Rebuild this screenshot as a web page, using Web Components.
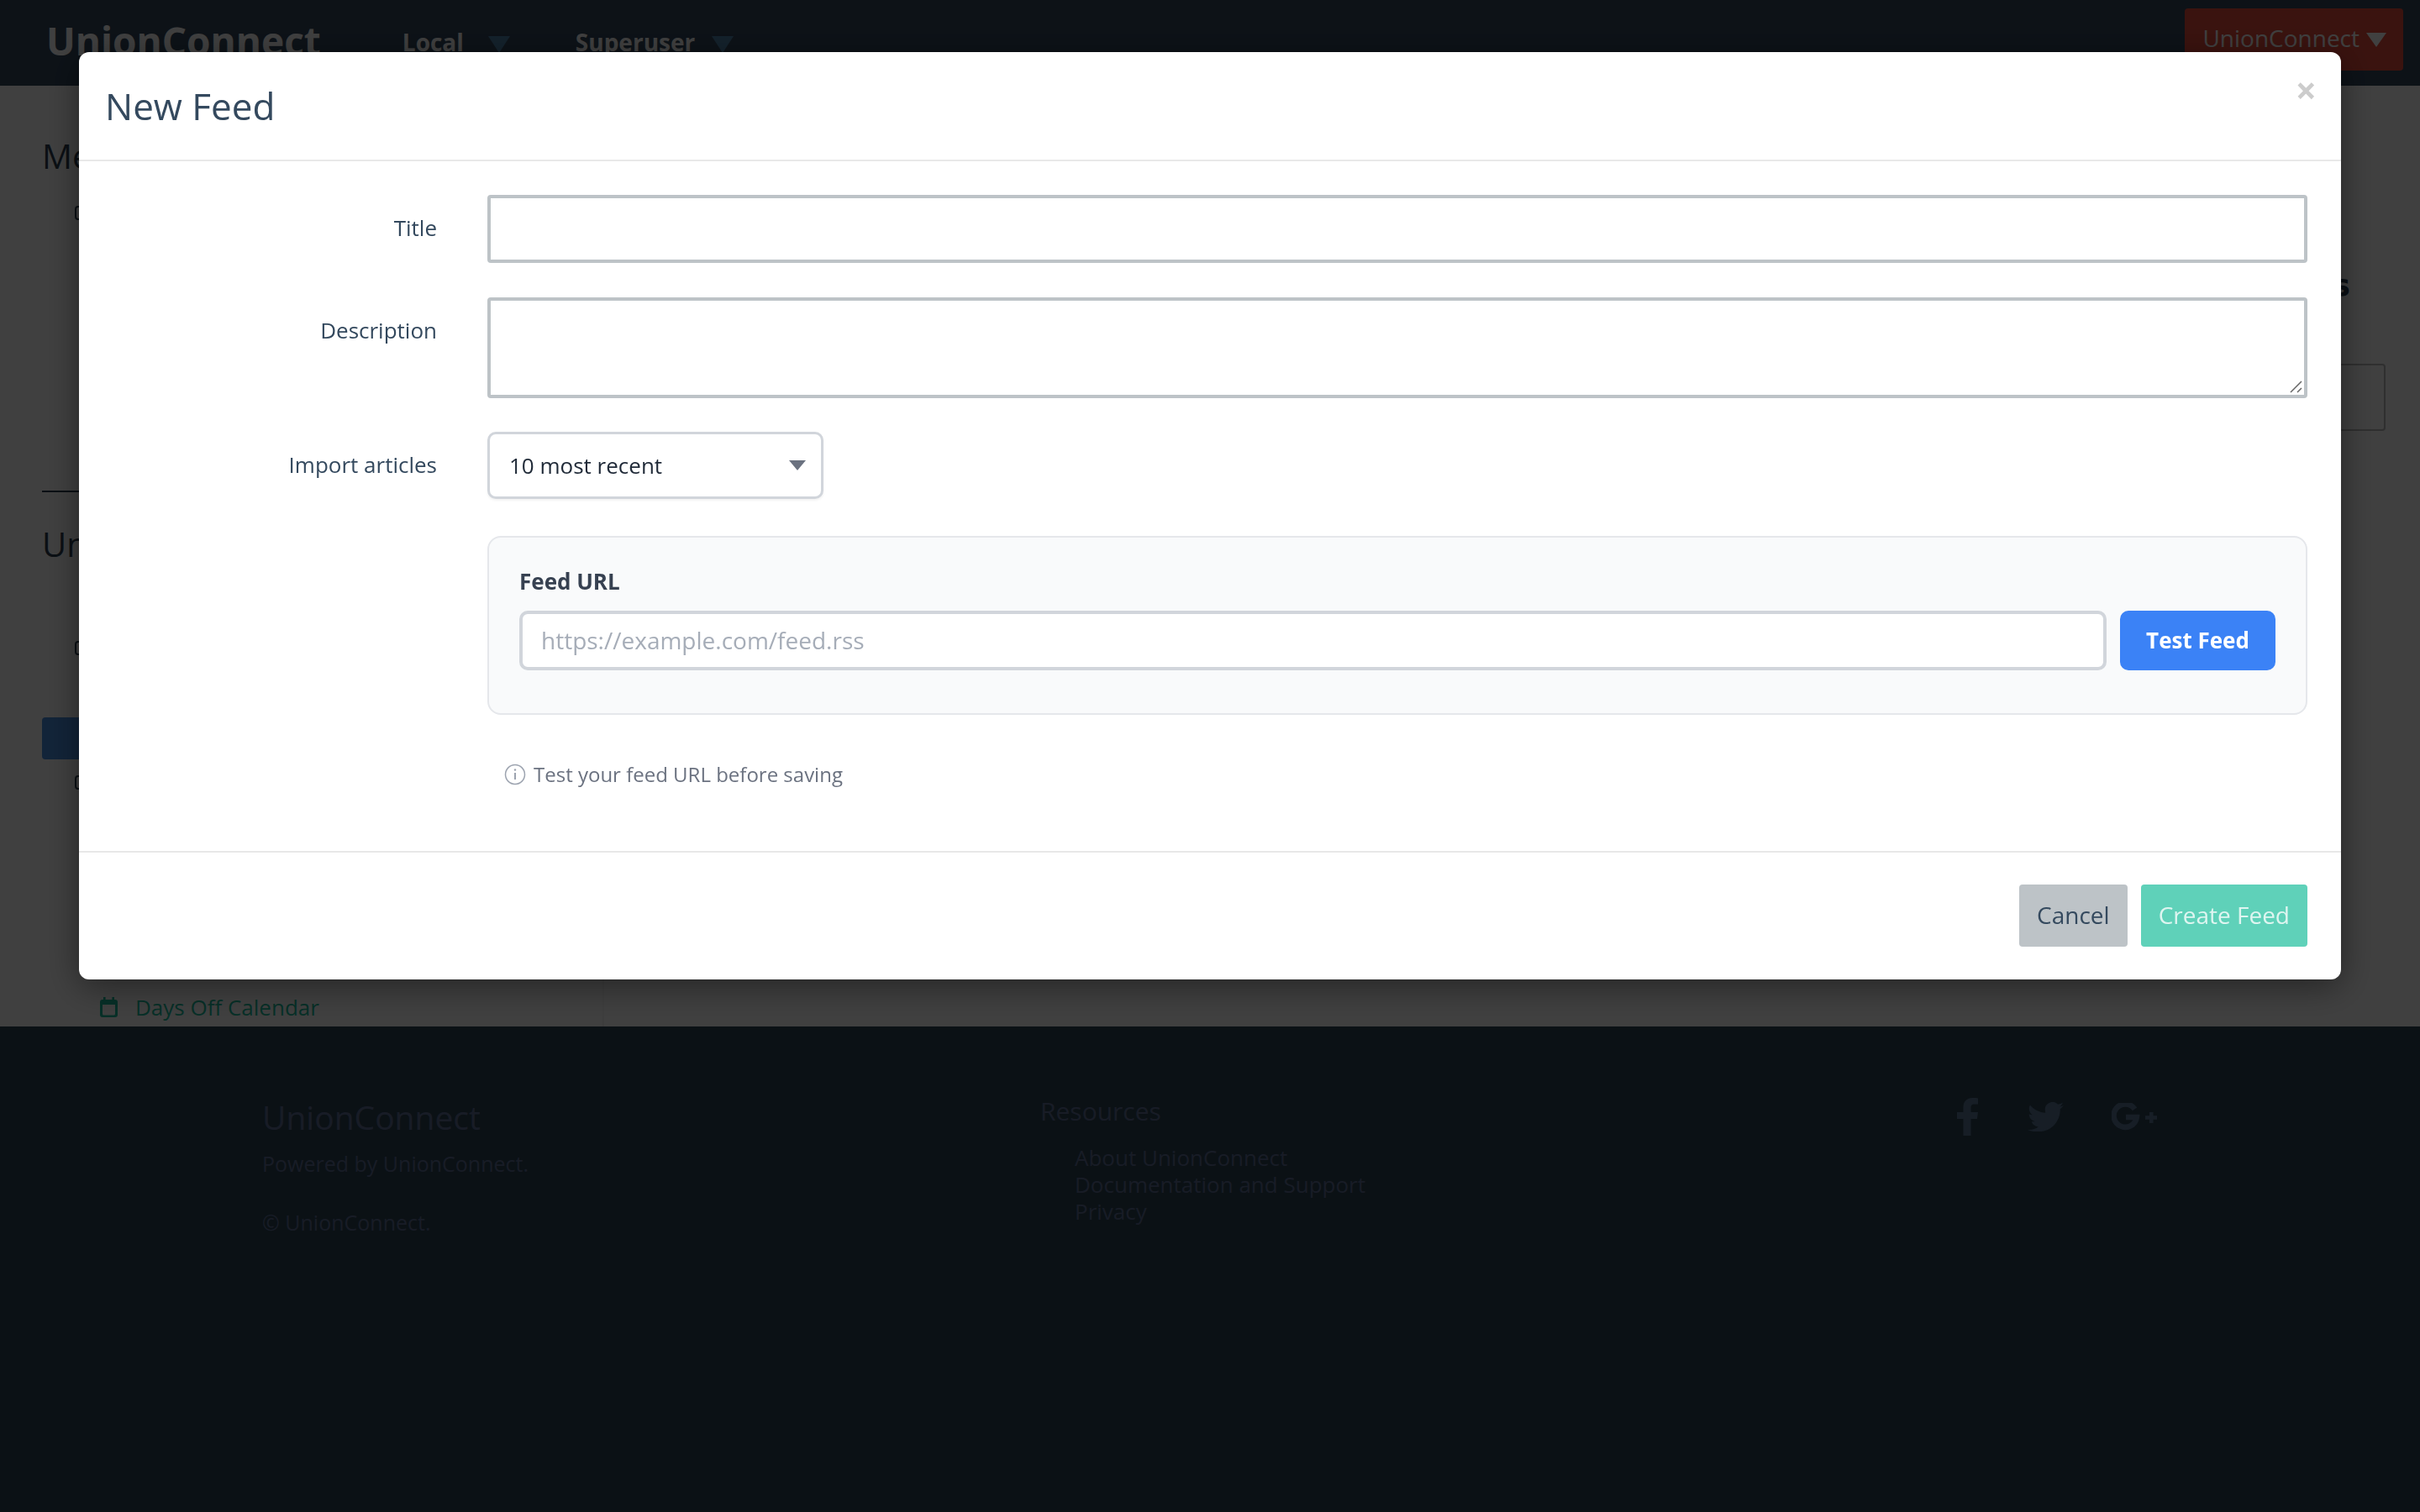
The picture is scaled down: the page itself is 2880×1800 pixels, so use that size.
<!DOCTYPE html>
<html lang="en">
<head>
<meta charset="utf-8">
<title>UnionConnect</title>
<style>
  html, body { margin: 0; height: 100%; }
  body { font-family: "Open Sans", "Noto Sans", sans-serif; background: #fff; }
</style>
</head>
<body>
<uc-page>
  <uc-topbar slot="top"></uc-topbar>
  <uc-backpage></uc-backpage>
  <uc-footer slot="bottom"></uc-footer>
</uc-page>
<uc-modal heading="New Feed">
  <uc-field label="Title"><div style="height:81px;border:4px solid #bdc3c7;border-radius:4px;box-sizing:border-box;background:#fff"></div></uc-field>
  <uc-field label="Description" gap="41"><uc-textarea></uc-textarea></uc-field>
  <uc-field label="Import articles" gap="40"><uc-select value="10 most recent"></uc-select></uc-field>
  <uc-feed-test></uc-feed-test>
  <uc-hint>Test your feed URL before saving</uc-hint>
  <uc-button slot="actions" kind="cancel">Cancel</uc-button>
  <uc-button slot="actions" kind="create">Create Feed</uc-button>
</uc-modal>

<script>
class Page extends HTMLElement {
  constructor() {
    super();
    this.attachShadow({ mode: 'open' });
    this.shadowRoot.innerHTML = `
      <style>
        :host { display: flex; flex-direction: column; height: 1800px; overflow: hidden; }
      </style>
      <slot name="top"></slot>
      <slot></slot>
      <slot name="bottom"></slot>
    `;
  }
}

class Topbar extends HTMLElement {
  constructor() {
    super();
    this.attachShadow({ mode: 'open' });
    this.shadowRoot.innerHTML = `
      <style>
        :host { display: flex; align-items: flex-start; height: 102px; background: #34495e; color: #fff; padding: 0 20px 0 55px; box-sizing: border-box; }
        .logo { font-size: 46px; font-weight: 700; line-height: 66px; margin-top: 15px; margin-right: 97px; }
        .menu { display: flex; align-items: center; font-size: 28px; font-weight: 700; line-height: 40px; margin-top: 30px; margin-right: 78px; }
        .menu i { width: 0; height: 0; margin: 6px 0 0 29px; border: 13px solid transparent; border-top: 20px solid #5088b0; border-bottom: 0; }
        .spacer { flex: 1; }
        .account { display: flex; align-items: center; height: 74px; margin-top: 10px; padding: 0 20px 4px 21px; box-sizing: border-box; background: #e74c3c; border-radius: 4px; font-size: 28px; }
        .account i { width: 0; height: 0; margin: 4px 0 0 8px; border: 12px solid transparent; border-top: 17px solid #fff; border-bottom: 0; }
      </style>
      <div class="logo">UnionConnect</div>
      <div class="menu">Local<i></i></div>
      <div class="menu">Superuser<i style="margin-left:20px"></i></div>
      <div class="spacer"></div>
      <div class="account">UnionConnect<i></i></div>
    `;
  }
}

// what shows around the edges of the dialog
class Backpage extends HTMLElement {
  constructor() {
    super();
    this.attachShadow({ mode: 'open' });
    this.shadowRoot.innerHTML = `
      <style>
        :host { display: grid; grid-template-columns: 719px 1fr; height: 1120px; background: #fff; color: #2c3e50; box-sizing: border-box; }
        .left { padding: 62px 0 0 50px; border-right: 2px solid #f4f4f4; }
        h2 { margin: 0; font-size: 40px; font-weight: 400; line-height: 44px; }
        .peek { width: 14px; height: 17px; margin-left: 39px; box-sizing: border-box; border: 2px solid #2c3e50; border-radius: 4px; }
        hr { margin: 0; height: 0; border: 0; border-top: 2px solid #2c3e50; }
        .chip { height: 50px; width: 200px; background: #4a90e2; border-radius: 4px; }
        .cal { display: flex; align-items: center; gap: 21px; margin: 0 0 0 69px; color: #1abc9c; font-size: 26px; line-height: 36px; }
        .right { display: flex; flex-direction: column; align-items: flex-end; padding: 218px 41px 0 0; }
        .right h3 { margin: 0 42px 0 0; font-family: "DejaVu Sans", sans-serif; font-size: 36px; line-height: 40px; }
        .box { margin-top: 73px; width: 400px; height: 80px; border: 2px solid #bbb; border-radius: 4px; box-sizing: border-box; }
      </style>
      <div class="left">
        <h2>Me</h2>
        <div class="peek" style="margin-top:37px"></div>
        <hr style="margin-top:322px">
        <h2 style="margin-top:40px">Un</h2>
        <div class="peek" style="margin-top:93px"></div>
        <div class="chip" style="margin-top:74px"></div>
        <div class="peek" style="margin-top:19px"></div>
        <div class="cal" style="margin-top:241px">
          <svg width="21" height="24" viewBox="0 0 21 24"><path fill="#1abc9c" d="M4 0h2.600v3H14.400V0H17v3h1a3 3 0 0 1 3 3v15a3 3 0 0 1-3 3H3a3 3 0 0 1-3-3V6a3 3 0 0 1 3-3h1zM3 9V20a1.500 1.500 0 0 0 1.500 1.500H16.500A1.500 1.500 0 0 0 18 20V9z"/></svg>
          <span>Days Off Calendar</span>
        </div>
      </div>
      <div class="right">
        <h3>s</h3>
        <div class="box"></div>
      </div>
    `;
  }
}

class Footer extends HTMLElement {
  constructor() {
    super();
    this.attachShadow({ mode: 'open' });
    this.shadowRoot.innerHTML = `
      <style>
        :host { display: block; flex: 1; background: #2d4455; color: #5f7199; box-sizing: border-box; padding: 80px 0 0 312px; }
        .cols { display: flex; align-items: flex-start; }
        .about { width: 926px; padding-top: 6px; box-sizing: border-box; }
        .brand { font-size: 39px; line-height: 44px; margin-bottom: 17px; }
        .about p { margin: 0 0 38px; font-size: 25px; line-height: 32px; }
        .res { width: 1091px; }
        .res h4 { margin: 0 0 18px; font-size: 30px; font-weight: 400; line-height: 42px; }
        .res a { display: block; margin-left: 41px; font-size: 26px; line-height: 32px; }
        .social { display: flex; align-items: flex-start; height: 46px; margin-top: 5px; color: #5b7a99; }
        .tw { margin: 5px 0 0 59px; }
        .gp { margin: 6px 0 0 57px; }
      </style>
      <div class="cols">
        <div class="about">
          <div class="brand">UnionConnect</div>
          <p>Powered by UnionConnect.</p>
          <p>&copy; UnionConnect.</p>
        </div>
        <div class="res">
          <h4>Resources</h4>
          <a>About UnionConnect</a>
          <a>Documentation and Support</a>
          <a>Privacy</a>
        </div>
        <div class="social">
          <svg width="25" height="45" viewBox="0 0 25 45"><path fill="currentColor" d="M7.500 45V25H0v-8h7.500V11C7.500 4 12 0 18.500 0c3 0 5.500.2 6.500.4v7h-4.300c-3.500 0-4.200 1.700-4.200 4.100V17H25l-1.100 8h-7.400v20z"/></svg>
          <svg class="tw" width="43" height="35" viewBox="0 0 45 36.600"><path fill="currentColor" d="M45 4.300c-1.700.8-3.400 1.300-5.300 1.500 1.900-1.100 3.400-3 4-5.100-1.800 1-3.800 1.800-5.900 2.200A9.300 9.300 0 0 0 22 11.300c0 .7.100 1.400.2 2.100C14.500 13 7.700 9.300 3.100 3.700a9.300 9.300 0 0 0 2.900 12.300c-1.500 0-3-.5-4.200-1.100v.1c0 4.500 3.200 8.200 7.400 9.100-1.400.4-2.800.4-4.200.2 1.200 3.700 4.600 6.300 8.600 6.400A18.600 18.600 0 0 1 0 34.500 26.200 26.200 0 0 0 14.200 36.600c17 0 26.300-14.600 26.300-26.800V8.600c1.800-1.300 3.400-2.900 4.500-4.300z"/></svg>
          <svg class="gp" width="54" height="34" viewBox="0 0 54 34"><path fill="none" stroke="currentColor" stroke-width="6.500" d="M27.500 7.300A13.700 13.700 0 1 0 29.800 17H17"/><path fill="currentColor" d="M45 11h4.500v4.200H54v4.600h-4.500V24H45v-4.200h-5v-4.600h5z"/></svg>
        </div>
      </div>
    `;
  }
}

class Modal extends HTMLElement {
  constructor() {
    super();
    this.attachShadow({ mode: 'open' });
    this.shadowRoot.innerHTML = `
      <style>
        :host { position: fixed; inset: 0; display: block; z-index: 10; }
        #backdrop { position: absolute; inset: 0; background: rgba(0,0,0,0.75); }
        #modal { position: absolute; left: 94px; top: 62px; width: 2692px; height: 1104px; display: flex; flex-direction: column; background: #fff; border-radius: 12px; box-shadow: 0 8px 40px rgba(0,0,0,0.45); color: #34495e; }
        header { display: flex; justify-content: space-between; height: 128px; border-bottom: 2px solid #e8e8e8; padding: 0 29px 0 31px; }
        h1 { margin: 0; font-size: 44px; font-weight: 400; line-height: 128px; }
        .close { font-size: 44px; font-weight: 700; color: #ccc; line-height: 50px; margin-top: 20px; }
        #main { flex: 1; padding: 40px 40px 0 0; }
        #actions { display: flex; justify-content: flex-end; gap: 16px; height: 153px; padding: 38px 40px 0 0; box-sizing: border-box; border-top: 2px solid #e8e8e8; }
      </style>
      <div id="backdrop"></div>
      <div id="modal">
        <header>
          <h1></h1>
          <div class="close">&times;</div>
        </header>
        <section id="main"><slot></slot></section>
        <section id="actions"><slot name="actions"></slot></section>
      </div>
    `;
    this.shadowRoot.querySelector('h1').textContent = this.getAttribute('heading');
  }
}

class Field extends HTMLElement {
  constructor() {
    super();
    this.attachShadow({ mode: 'open' });
    this.shadowRoot.innerHTML = `
      <style>
        :host { display: grid; grid-template-columns: 426px 1fr; column-gap: 60px; }
        label { text-align: right; font-size: 26px; line-height: 36px; padding-top: 21px; }
        .c { min-width: 0; }
      </style>
      <label></label>
      <div class="c"><slot></slot></div>
    `;
    this.shadowRoot.querySelector('label').textContent = this.getAttribute('label');
    if (this.hasAttribute('gap')) this.style.marginTop = this.getAttribute('gap') + 'px';
  }
}

class TextArea extends HTMLElement {
  constructor() {
    super();
    this.attachShadow({ mode: 'open' });
    this.shadowRoot.innerHTML = `
      <style>
        :host { display: block; position: relative; height: 120px; }
        textarea { display: block; width: 100%; height: 120px; box-sizing: border-box; border: 4px solid #bdc3c7; border-radius: 4px; outline: 0; background: #fff; resize: none; margin: 0; }
        svg { position: absolute; right: 6px; bottom: 6px; }
      </style>
      <textarea></textarea>
      <svg width="15" height="15" viewBox="0 0 15 15" fill="none" stroke="#666" stroke-width="1.500"><path d="M1 14 14 1M9 14 14 9"/></svg>
    `;
  }
}

class Select extends HTMLElement {
  constructor() {
    super();
    this.attachShadow({ mode: 'open' });
    this.shadowRoot.innerHTML = `
      <style>
        :host { display: flex; align-items: center; justify-content: space-between; width: 400px; height: 80px; box-sizing: border-box; border: 3px solid #d1d5db; border-radius: 10px; padding: 0 18px 0 23px; background: #fff; box-shadow: 0 2px 3px rgba(0,0,0,.05); font-size: 26px; color: #1f2937; }
        i { width: 0; height: 0; border: 10px solid transparent; border-top: 12px solid #6b7280; border-bottom: 0; }
      </style>
      <span></span><i></i>
    `;
    this.shadowRoot.querySelector('span').textContent = this.getAttribute('value');
  }
}

class FeedTest extends HTMLElement {
  constructor() {
    super();
    this.attachShadow({ mode: 'open' });
    this.shadowRoot.innerHTML = `
      <style>
        :host { display: block; margin: 44px 0 0 486px; height: 213px; box-sizing: border-box; padding: 34px 36px 0 36px; background: #f9fafb; border: 2px solid #e5e7eb; border-radius: 16px; }
        label { display: block; font-size: 26px; font-weight: 700; line-height: 36px; color: #374151; }
        .row { display: flex; gap: 16px; margin-top: 17px; }
        .url { flex: 1; height: 71px; box-sizing: border-box; border: 4px solid #d1d5db; border-radius: 10px; background: #fff; padding: 0 22px; font-size: 28px; line-height: 63px; color: #a6adb8; }
        .go { width: 185px; height: 71px; background: #3b82f6; color: #fff; border-radius: 10px; font-size: 26px; font-weight: 700; line-height: 71px; text-align: center; }
      </style>
      <label>Feed URL</label>
      <div class="row">
        <div class="url">https://example.com/feed.rss</div>
        <div class="go">Test Feed</div>
      </div>
    `;
  }
}

class Hint extends HTMLElement {
  constructor() {
    super();
    this.attachShadow({ mode: 'open' });
    this.shadowRoot.innerHTML = `
      <style>
        :host { display: flex; align-items: center; gap: 9px; margin: 53px 0 0 506px; font-size: 24px; line-height: 36px; color: #6b7280; }
      </style>
      <svg width="26" height="26" viewBox="0 0 26 26" fill="none" stroke="#9ca3af"><circle cx="13" cy="13" r="11.500" stroke-width="1.500"/><path d="M13 11v8" stroke-width="2"/><circle cx="13" cy="7.500" r="1.200" fill="#9ca3af" stroke="none"/></svg>
      <span><slot></slot></span>
    `;
  }
}

class Button extends HTMLElement {
  constructor() {
    super();
    this.attachShadow({ mode: 'open' });
    this.shadowRoot.innerHTML = `
      <style>
        :host { display: block; height: 74px; padding: 0 21px; box-sizing: border-box; border-radius: 4px; font-size: 28px; line-height: 72px; }
        :host([kind="cancel"]) { background: #bdc3c7; color: #34495e; }
        :host([kind="create"]) { background: #5fd1b9; color: #def5f0; }
      </style>
      <slot></slot>
    `;
  }
}

customElements.define('uc-page', Page);
customElements.define('uc-topbar', Topbar);
customElements.define('uc-backpage', Backpage);
customElements.define('uc-footer', Footer);
customElements.define('uc-modal', Modal);
customElements.define('uc-field', Field);
customElements.define('uc-textarea', TextArea);
customElements.define('uc-select', Select);
customElements.define('uc-feed-test', FeedTest);
customElements.define('uc-hint', Hint);
customElements.define('uc-button', Button);
</script>
</body>
</html>
